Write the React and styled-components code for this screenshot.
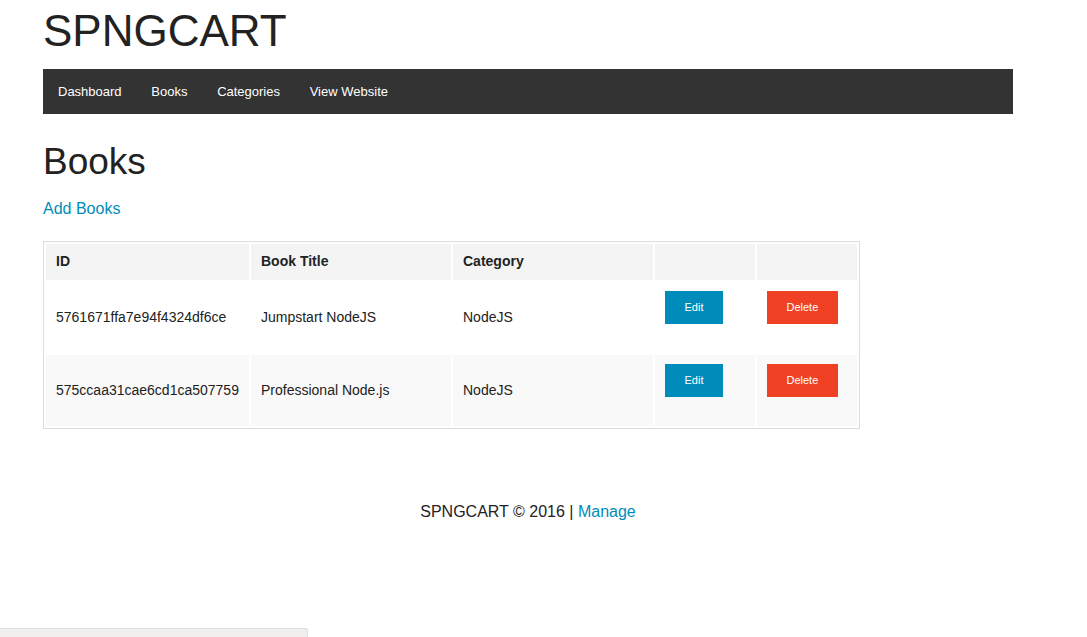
import React from 'react'
import styled, { createGlobalStyle } from 'styled-components'

const GlobalStyle = createGlobalStyle`
   html, body {
      margin: 0;
      padding: 0;
      background: #fff;
      font-family: "Liberation Sans", Arial, sans-serif;
      color: #222;
   }
`

const Page = styled.div`
   width: 970px;
   margin-left: 43px;
`

const Brand = styled.h1`
   margin: 0;
   font-size: 44px;
   font-weight: 400;
   line-height: 61px;
   color: #222;
`

const NavBar = styled.nav`
   margin-top: 8px;
   height: 45px;
   background-color: #333;
   display: flex;
   align-items: center;
   padding: 0 0 0 15px;
`

const NavLink = styled.a`
   color: #fff;
   font-size: 13px;
   text-decoration: none;
   margin-right: 29.7px;
   cursor: pointer;
`

const Heading = styled.h2`
   margin: 22px 0 0;
   font-size: 37px;
   font-weight: 400;
   line-height: 52px;
`

const TextLink = styled.a`
   color: #008cba;
   text-decoration: none;
   font-size: 16px;
   line-height: 25.6px;
   cursor: pointer;
`

const AddWrap = styled.p`
   margin: 8px 0 0;
   line-height: 25.6px;
`

const Table = styled.table`
   margin-top: 19px;
   border: 1px solid #ddd;
   border-spacing: 2px;
   font-size: 14px;
   color: #222;
`

const Th = styled.th`
   background: #f4f4f4;
   text-align: left;
   font-weight: 700;
   height: 36px;
   padding: 0 10px 1px;
   box-sizing: border-box;
   width: ${props => props.w}px;
`

const Tr = styled.tr`
   background: ${props => (props.striped ? '#f9f9f9' : '#fff')};
`

const Td = styled.td`
   height: 71px;
   padding: 0 10px;
   box-sizing: border-box;
   vertical-align: ${props => (props.top ? 'top' : 'middle')};
   padding-top: ${props => (props.top ? '9px' : '0')};
`

const Button = styled.a`
   display: inline-block;
   background: ${props => (props.danger ? '#f04124' : '#008cba')};
   color: #fff;
   font-size: 11px;
   line-height: 12px;
   padding: 10px 19.5px 11px;
   text-decoration: none;
   cursor: pointer;
`

const Footer = styled.footer`
   margin-top: 70px;
   text-align: center;
   font-size: 16px;
   line-height: 25.6px;
`

const StatusBar = styled.div`
   position: fixed;
   left: 0;
   bottom: 0;
   width: 308px;
   height: 9px;
   background: #f0efee;
   border-top: 1px solid #ddd;
   border-right: 1px solid #ddd;
   border-top-right-radius: 3px;
   box-sizing: border-box;
`

const books = [
   { id: '5761671ffa7e94f4324df6ce', title: 'Jumpstart NodeJS', category: 'NodeJS' },
   { id: '575ccaa31cae6cd1ca507759', title: 'Professional Node.js', category: 'NodeJS' },
]

const App = () => {
   return (
      <>
         <GlobalStyle />
         <Page>
            <Brand>SPNGCART</Brand>
            <NavBar>
               <NavLink>Dashboard</NavLink>
               <NavLink>Books</NavLink>
               <NavLink>Categories</NavLink>
               <NavLink>View Website</NavLink>
            </NavBar>
            <Heading>Books</Heading>
            <AddWrap>
               <TextLink>Add Books</TextLink>
            </AddWrap>
            <Table>
               <thead>
                  <tr>
                     <Th w={203}>ID</Th>
                     <Th w={200}>Book Title</Th>
                     <Th w={200}>Category</Th>
                     <Th w={100}></Th>
                     <Th w={100}></Th>
                  </tr>
               </thead>
               <tbody>
                  {books.map((book, i) => (
                     <Tr key={book.id} striped={i % 2 === 1}>
                        <Td>{book.id}</Td>
                        <Td>{book.title}</Td>
                        <Td>{book.category}</Td>
                        <Td top>
                           <Button>Edit</Button>
                        </Td>
                        <Td top>
                           <Button danger>Delete</Button>
                        </Td>
                     </Tr>
                  ))}
               </tbody>
            </Table>
            <Footer>
               SPNGCART © 2016 | <TextLink>Manage</TextLink>
            </Footer>
         </Page>
         <StatusBar />
      </>
   )
}

export default App
